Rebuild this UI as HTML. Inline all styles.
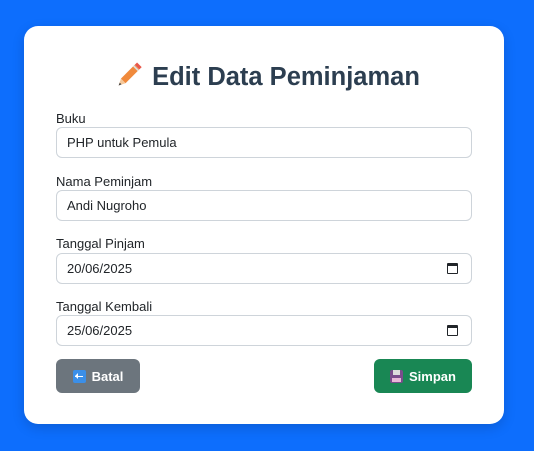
<!DOCTYPE html>
<html><head><style>
*{box-sizing:border-box;margin:0;padding:0}
body{width:534px;height:451px;background:#0d6efd;font-family:"Liberation Sans",sans-serif;position:relative;overflow:hidden}
.card{position:absolute;left:24px;top:26px;width:480px;height:398px;background:#fff;border-radius:14px;box-shadow:0 4px 12px rgba(0,0,0,.15)}
h1{position:absolute;left:0;right:0;top:59px;text-align:center;font-size:25.5px;font-weight:bold;color:#2c3e50;line-height:32px;white-space:nowrap}
.lbl{position:absolute;left:56px;font-size:13px;color:#212529}
.inp{position:absolute;left:56px;width:416px;height:31px;border:1px solid #ced4da;border-radius:6px;font-size:13px;color:#212529;padding-left:10px;line-height:29px}
.cal{position:absolute;right:13px;top:9px;width:11px;height:11px;border:1.5px solid #212529;border-top-width:3px;border-radius:1px}
.btn{position:absolute;top:359px;height:34px;border-radius:6px;color:#fff;font-weight:bold;font-size:13px;display:flex;align-items:center;justify-content:center;gap:6px}
.ic{width:13px;height:13px;border-radius:2px;position:relative;flex:none}
</style></head><body>
<div class="card"></div>
<h1><svg width="30" height="30" viewBox="0 0 26 26" style="vertical-align:-4px;margin-right:8px"><path d="M6 17 L18 5 L22 9 L10 21 Z" fill="#f08a3c"/><path d="M18 5 L20 3 L24 7 L22 9 Z" fill="#e8584b"/><path d="M17 6 L21 10" stroke="#ddd" stroke-width="1.5"/><path d="M6 17 L10 21 L4 23 Z" fill="#f5c89a"/><path d="M4 23 L5 20.5 L6.5 22 Z" fill="#444"/></svg>Edit Data Peminjaman</h1>
<div class="lbl" style="top:111px">Buku</div>
<div class="inp" style="top:127px">PHP untuk Pemula</div>
<div class="lbl" style="top:174px">Nama Peminjam</div>
<div class="inp" style="top:190px">Andi Nugroho</div>
<div class="lbl" style="top:236px">Tanggal Pinjam</div>
<div class="inp" style="top:253px">20/06/2025<span class="cal"></span></div>
<div class="lbl" style="top:299px">Tanggal Kembali</div>
<div class="inp" style="top:315px">25/06/2025<span class="cal"></span></div>
<div class="btn" style="left:56px;width:84px;background:#6c757d"><span class="ic" style="background:#3b8fe8"><span style="position:absolute;left:2px;top:6px;width:8px;height:1.5px;background:#fff"></span><span style="position:absolute;left:2px;top:4px;width:0;height:0;border:3px solid transparent;border-right:3px solid #fff;border-left:0;margin-top:-0.5px"></span></span>Batal</div>
<div class="btn" style="left:374px;width:98px;background:#198754"><span class="ic" style="background:#7a4d8c"><span style="position:absolute;left:3px;top:0;width:7px;height:5px;background:#ddd"></span><span style="position:absolute;left:2px;bottom:1px;width:9px;height:4px;background:#e8b8d8"></span></span>Simpan</div>
</body></html>
